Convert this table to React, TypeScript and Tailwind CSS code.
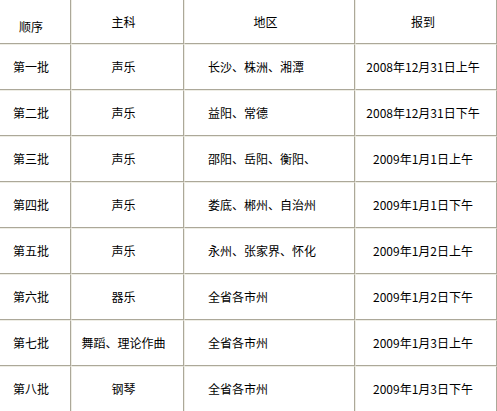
import { Fragment } from "react";

const rows = [
  ["第一批", "声乐", "长沙、株洲、湘潭", "2008年12月31日上午"],
  ["第二批", "声乐", "益阳、常德", "2008年12月31日下午"],
  ["第三批", "声乐", "邵阳、岳阳、衡阳、", "2009年1月1日上午"],
  ["第四批", "声乐", "娄底、郴州、自治州", "2009年1月1日下午"],
  ["第五批", "声乐", "永州、张家界、怀化", "2009年1月2日上午"],
  ["第六批", "器乐", "全省各市州", "2009年1月2日下午"],
  ["第七批", "舞蹈、理论作曲", "全省各市州", "2009年1月3日上午"],
  ["第八批", "钢琴", "全省各市州", "2009年1月3日下午"],
];

const cell =
  "flex items-center border-b border-r border-b-[#aca899] border-r-[#aca899] border-t border-l border-t-[#eeede5] border-l-[#eeede5]";

export default function App() {
  return (
    <div
      className="w-[497px] h-[411px] overflow-hidden bg-white text-[12px] text-black"
      style={{ fontFamily: '"Noto Sans CJK SC", "Noto Sans", sans-serif' }}
    >
      <div className="grid grid-cols-[71px_113px_171px_142px] grid-rows-[44px] auto-rows-[46px]">
        {/* header */}
        <div className={`${cell} border-t-0 border-l-0 justify-center pr-2 pt-[10px]`}>顺序</div>
        <div className={`${cell} border-t-0 justify-center pr-2`}>主科</div>
        <div className={`${cell} border-t-0 justify-center pr-2`}>地区</div>
        <div className={`${cell} border-t-0 justify-center pr-[6px]`}>报到</div>

        {rows.map((r) => (
          <Fragment key={r[0]}>
            <div className={`${cell} border-l-0 justify-center pr-2`}>{r[0]}</div>
            <div className={`${cell} justify-center pr-2`}>{r[1]}</div>
            <div className={`${cell} pl-[23px]`}>{r[2]}</div>
            <div className={`${cell} justify-center pr-[6px]`}>{r[3]}</div>
          </Fragment>
        ))}
      </div>
    </div>
  );
}
